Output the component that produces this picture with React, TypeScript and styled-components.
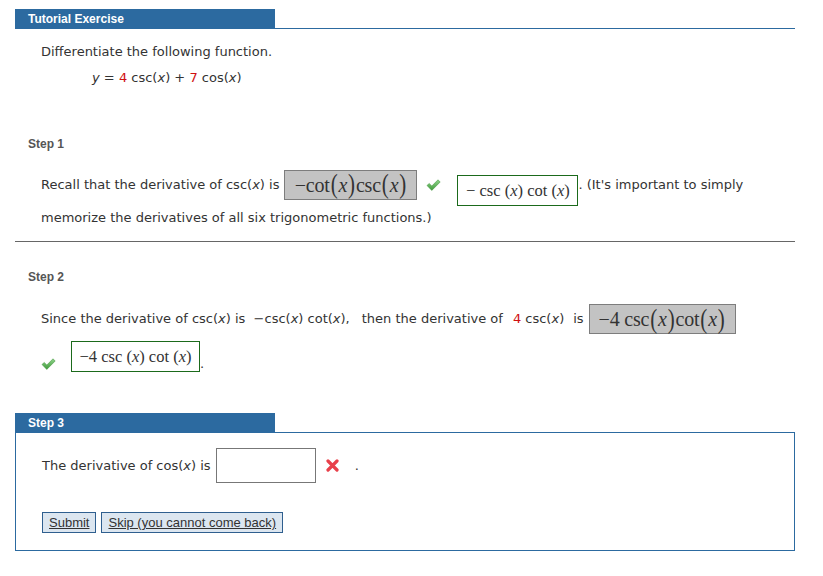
import { FC } from "react";
import styled, { createGlobalStyle } from "styled-components";

const GlobalStyle = createGlobalStyle`
  body {
    margin: 0;
    background: #ffffff;
    font-family: "DejaVu Sans", Verdana, sans-serif;
    color: #333333;
  }
`;

const BLUE = "#2c6aa0";

const Page = styled.div`
  width: 780px;
  margin-left: 15px;
  padding-top: 9px;
`;

const TabRow = styled.div`
  display: flex;
  border-bottom: 1px solid ${BLUE};
`;

const Tab = styled.div`
  width: 247px;
  height: 19px;
  padding-left: 13px;
  background: ${BLUE};
  color: #ffffff;
  font-family: "Liberation Sans", Arial, sans-serif;
  font-weight: bold;
  font-size: 12px;
  line-height: 20px;
`;

const Section = styled.div<{ $top?: number }>`
  padding: ${(p) => p.$top ?? 0}px 0 0 26px;
`;

const Line = styled.div<{ $mt?: number; $indent?: number; $end?: boolean }>`
  display: flex;
  align-items: ${(p) => (p.$end ? "flex-end" : "center")};
  margin-top: ${(p) => p.$mt ?? 0}px;
  padding-left: ${(p) => p.$indent ?? 0}px;
  font-size: 13px;
  line-height: 16px;
  white-space: nowrap;
`;

const StepLabel = styled.div<{ $mt: number }>`
  margin-top: ${(p) => p.$mt}px;
  margin-left: 13px;
  font-family: "Liberation Sans", Arial, sans-serif;
  font-weight: bold;
  font-size: 12px;
  color: #555555;
`;

const Red = styled.span`
  color: #d01010;
`;

const Var = styled.span`
  font-style: italic;
`;

const Gap = styled.span<{ $w: number }>`
  display: inline-block;
  flex: none;
  width: ${(p) => p.$w}px;
`;

const GreyBox = styled.span<{ $w: number }>`
  display: inline-flex;
  align-items: center;
  justify-content: center;
  width: ${(p) => p.$w}px;
  height: 28px;
  background: #c3c3c3;
  border: 1px solid #7d7d7d;
  font-family: "Liberation Serif", "Times New Roman", serif;
  font-size: 20px;
  color: #333333;
  letter-spacing: -0.2px;
`;

const Paren = styled.span`
  display: inline-block;
  font-size: 21px;
  line-height: 1;
  transform: scaleY(1.25);
  margin: 0 1px;
`;

/* the typeset answer sits a little below the text baseline */
const GreenBox = styled.span<{ $w: number; $shift?: number }>`
  display: inline-flex;
  align-items: center;
  justify-content: center;
  width: ${(p) => p.$w}px;
  height: 29px;
  border: 1px solid #1b6a1b;
  margin-top: ${(p) => p.$shift ?? 0}px;
  margin-bottom: ${(p) => -(p.$shift ?? 0)}px;
  font-family: "Liberation Serif", "Times New Roman", serif;
  font-size: 16.5px;
  color: #333333;
`;

const MathVar = styled.span`
  font-style: italic;
`;

const Divider = styled.hr<{ $mt: number }>`
  margin: ${(p) => p.$mt}px 0 0;
  border: none;
  border-top: 1px solid #666666;
`;

const Spacer = styled.div<{ $h: number }>`
  height: ${(p) => p.$h}px;
`;

const Panel = styled.div`
  border: 1px solid ${BLUE};
  border-top: none;
  height: 117px;
`;

const AnswerInput = styled.input`
  width: 100px;
  height: 35px;
  box-sizing: border-box;
  border: 1px solid #777777;
  margin: 0;
`;

const Buttons = styled.div`
  display: flex;
  gap: 5px;
  margin: 29px 0 0 26px;
`;

const Btn = styled.button`
  height: 21px;
  padding: 0 6px;
  background: #dce6f0;
  border: 1px solid #2f5f8f;
  font-family: "Liberation Sans", Arial, sans-serif;
  font-size: 13px;
  color: #333333;
  text-decoration: underline;
  cursor: pointer;
`;

const CheckWrap = styled.span<{ $lift?: number }>`
  display: inline-flex;
  margin-bottom: ${(p) => p.$lift ?? 0}px;
`;

const Check: FC<{ lift?: number }> = ({ lift }) => (
  <CheckWrap $lift={lift}>
    <svg width="15" height="12" viewBox="0 0 15 12">
      <defs>
        <linearGradient id="cg" x1="0" y1="0" x2="0" y2="1">
          <stop offset="0" stopColor="#8fd48a" />
          <stop offset="1" stopColor="#3f9a3a" />
        </linearGradient>
      </defs>
      <path
        d="M1 6.5 L3.2 4.5 L5.8 7 L12 0.8 L14.2 3 L5.8 11.4 Z"
        fill="url(#cg)"
        stroke="#4a9a45"
        strokeWidth="0.6"
      />
    </svg>
  </CheckWrap>
);

const Cross: FC = () => (
  <svg width="13" height="13" viewBox="0 0 13 13">
    <path
      d="M2 2 L11 11 M11 2 L2 11"
      stroke="#e8404a"
      strokeWidth="3.2"
      strokeLinecap="round"
    />
  </svg>
);

// big-paren argument used inside the grey answer boxes
const Arg: FC = () => (
  <>
    <Paren>(</Paren>
    <i>x</i>
    <Paren>)</Paren>
  </>
);

// typeset style function used inside the green boxes
const MFn: FC<{ name: string }> = ({ name }) => (
  <>
    {name}&nbsp;(<MathVar>x</MathVar>)
  </>
);

export default function App() {
  return (
    <>
      <GlobalStyle />
      <Page>
        <TabRow>
          <Tab>Tutorial Exercise</Tab>
        </TabRow>
        <Section $top={15}>
          <Line>Differentiate the following function.</Line>
          <Line $mt={10} $indent={51}>
            <Var>y</Var>&nbsp;=&nbsp;<Red>4</Red>&nbsp;csc(<Var>x</Var>)&nbsp;+&nbsp;
            <Red>7</Red>&nbsp;cos(<Var>x</Var>)
          </Line>
        </Section>
        <StepLabel $mt={51}>Step 1</StepLabel>
        <Section $top={18}>
          <Line>
            Recall that the derivative of csc(<Var>x</Var>) is
            <Gap $w={5} />
            <GreyBox $w={131}>
              −cot<Arg />csc<Arg />
            </GreyBox>
            <Gap $w={9} />
            <Check />
            <Gap $w={16} />
            <GreenBox $w={119} $shift={6}>
              −&nbsp;<MFn name="csc" />&nbsp;<MFn name="cot" />
            </GreenBox>
            . (It's important to simply
          </Line>
          <Line $mt={10}>
            memorize the derivatives of all six trigonometric functions.)
          </Line>
        </Section>
        <Divider $mt={15} />
        <StepLabel $mt={28}>Step 2</StepLabel>
        <Section $top={20}>
          <Line>
            Since the derivative of csc(<Var>x</Var>) is&nbsp; −csc(<Var>x</Var>)&nbsp;cot(
            <Var>x</Var>),
            <Gap $w={12} />
            then the derivative of
            <Gap $w={10} />
            <Red>4</Red>&nbsp;csc(<Var>x</Var>)
            <Gap $w={9} />
            is
            <Gap $w={5} />
            <GreyBox $w={145}>
              −4&nbsp;csc<Arg />cot<Arg />
            </GreyBox>
          </Line>
          <Line $mt={7} $end>
            <Check lift={2} />
            <Gap $w={15} />
            <GreenBox $w={127}>
              −4&nbsp;<MFn name="csc" />&nbsp;<MFn name="cot" />
            </GreenBox>
            .
          </Line>
        </Section>
        <Spacer $h={41} />
        <TabRow>
          <Tab>Step 3</Tab>
        </TabRow>
        <Panel>
          <Section $top={15}>
            <Line>
              The derivative of cos(<Var>x</Var>) is
              <Gap $w={5} />
              <AnswerInput type="text" />
              <Gap $w={10} />
              <Cross />
              <Gap $w={16} />.
            </Line>
          </Section>
          <Buttons>
            <Btn>Submit</Btn>
            <Btn>Skip (you cannot come back)</Btn>
          </Buttons>
        </Panel>
      </Page>
    </>
  );
}
